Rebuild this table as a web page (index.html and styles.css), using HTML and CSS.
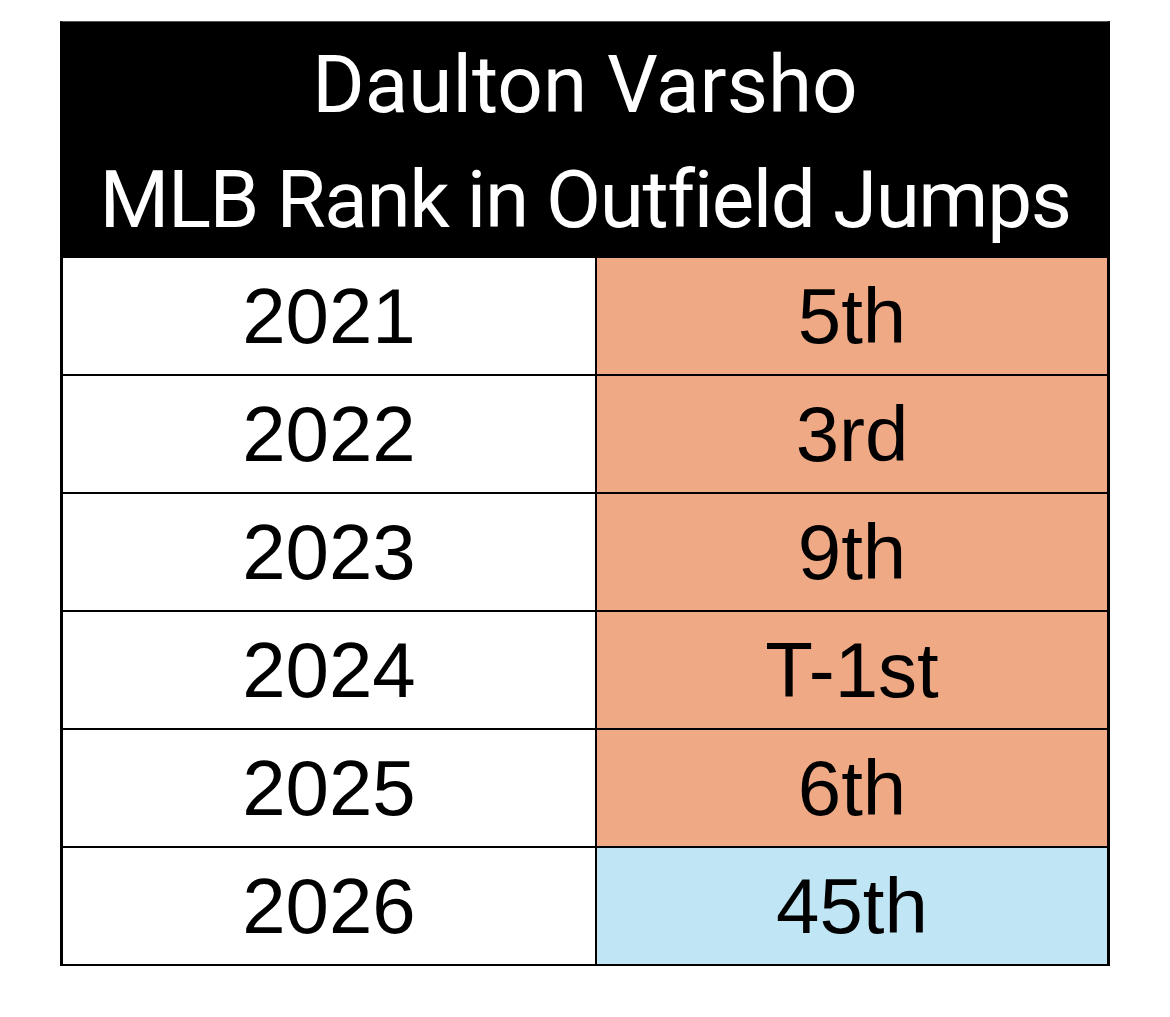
FILE: index.html
```html
<!DOCTYPE html>
<html>
<head>
<meta charset="utf-8">
<link rel="stylesheet" href="styles.css">
</head>
<body>
<div class="sheet">
  <div class="title">
    <div class="title-line">Daulton Varsho</div>
    <div class="title-line tight">MLB Rank in Outfield Jumps</div>
  </div>
  <div class="row"><div class="year">2021</div><div class="rank hot">5th</div></div>
  <div class="row"><div class="year">2022</div><div class="rank hot">3rd</div></div>
  <div class="row"><div class="year">2023</div><div class="rank hot">9th</div></div>
  <div class="row"><div class="year">2024</div><div class="rank hot">T-1st</div></div>
  <div class="row"><div class="year">2025</div><div class="rank hot">6th</div></div>
  <div class="row last"><div class="year">2026</div><div class="rank cold">45th</div></div>
</div>
</body>
</html>
```

FILE: styles.css
```css
html, body {
  margin: 0;
  padding: 0;
  background: #ffffff;
}

.sheet {
  margin: 21px 0 0 60px;
  width: 1050px;
  box-sizing: border-box;
  border-left: 3px solid #000;
  border-right: 3px solid #000;
  border-bottom: 2px solid #000;
  border-top: 1px solid #555;
}

.title {
  background: #000;
  color: #fff;
  height: 236px;
  box-sizing: border-box;
  padding-top: 6px;
  display: flex;
  flex-direction: column;
  align-items: center;
  justify-content: center;
  font-family: Roboto, "Liberation Sans", sans-serif;
  font-size: 80px;
  line-height: 115px;
}

.title-line {
  white-space: nowrap;
}

.title-line.tight {
  letter-spacing: -1.4px;
}

.row {
  display: grid;
  grid-template-columns: 534px 1fr;
  height: 118px;
  box-sizing: border-box;
  border-bottom: 2px solid #000;
}

.row.last {
  height: 116px;
  border-bottom: none;
}

.year, .rank {
  display: flex;
  align-items: center;
  justify-content: center;
  font-family: "Liberation Sans", Arial, sans-serif;
  font-size: 78px;
  color: #000;
}

.year {
  background: #fff;
  border-right: 2px solid #000;
}

.rank.hot {
  background: #f0a985;
}

.rank.cold {
  background: #c0e6f5;
}
```
